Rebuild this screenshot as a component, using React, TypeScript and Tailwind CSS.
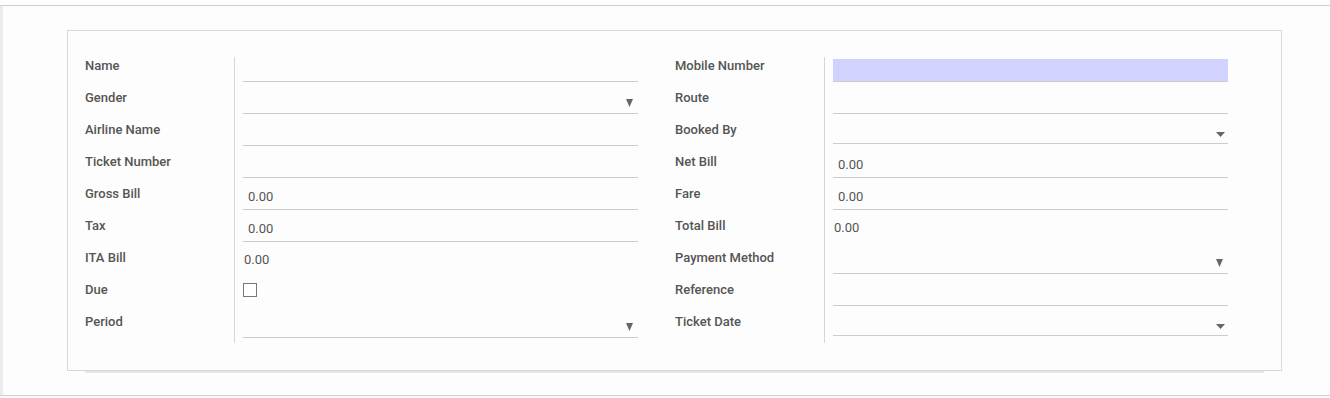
import React from "react";

type Field = {
  label: string;
  kind: "text" | "select" | "select2" | "value" | "readonly" | "check" | "highlight";
  value?: string;
};

const left: Field[] = [
  { label: "Name", kind: "text" },
  { label: "Gender", kind: "select" },
  { label: "Airline Name", kind: "text" },
  { label: "Ticket Number", kind: "text" },
  { label: "Gross Bill", kind: "value", value: "0.00" },
  { label: "Tax", kind: "value", value: "0.00" },
  { label: "ITA Bill", kind: "readonly", value: "0.00" },
  { label: "Due", kind: "check" },
  { label: "Period", kind: "select" },
];

const right: Field[] = [
  { label: "Mobile Number", kind: "highlight" },
  { label: "Route", kind: "text" },
  { label: "Booked By", kind: "select2" },
  { label: "Net Bill", kind: "value", value: "0.00" },
  { label: "Fare", kind: "value", value: "0.00" },
  { label: "Total Bill", kind: "readonly", value: "0.00" },
  { label: "Payment Method", kind: "select" },
  { label: "Reference", kind: "text" },
  { label: "Ticket Date", kind: "select2" },
];

function Caret({ wide }: { wide?: boolean }) {
  return wide ? (
    <svg width="9" height="5" viewBox="0 0 9 5" className="absolute right-[3px] top-[9px]">
      <path d="M0 0h9L4.5 5z" fill="#666" />
    </svg>
  ) : (
    <svg width="7" height="8" viewBox="0 0 7 8" className="absolute right-[5px] top-[8px]">
      <path d="M0 0h7L3.5 8z" fill="#666" />
    </svg>
  );
}

function Widget({ f }: { f: Field }) {
  switch (f.kind) {
    case "readonly":
      return (
        <div className="h-8 pt-[3px] pl-[1px] text-[13px] leading-4 text-[#555]">
          {f.value}
        </div>
      );
    case "check":
      return (
        <div className="h-8 pt-[2px]">
          <div className="h-[14px] w-[14px] border border-[#777] bg-white" />
        </div>
      );
    default:
      return (
        <div className="h-8 pt-[2px]">
          <div
            className={`relative border-b border-[#cccccc] ${
              f.kind === "select2" ? "h-[21px]" : "h-[23px]"
            } ${f.kind === "highlight" ? "bg-[#d2d2ff]" : ""}`}
          >
            {f.value && (
              <span className="absolute left-[5px] top-[2px] text-[13px] leading-4 text-[#555]">
                {f.value}
              </span>
            )}
            {f.kind === "select" && <Caret />}
            {f.kind === "select2" && <Caret wide />}
          </div>
        </div>
      );
  }
}

function Group({ fields }: { fields: Field[] }) {
  return (
    <div className="flex items-start">
      <div className="w-[150px] border-r border-[#d6d6d6]">
        {fields.map((f) => (
          <div
            key={f.label}
            className="h-8 pt-[1px] text-[13px] leading-4 font-medium text-[#555] last:h-[30px]"
          >
            {f.label}
          </div>
        ))}
      </div>
      <div className="ml-[8px] w-[395px]">
        {fields.map((f) => (
          <Widget key={f.label} f={f} />
        ))}
      </div>
    </div>
  );
}

export default function App() {
  return (
    <div
      className="h-[398px] w-[1330px] bg-[#fdfdfd] pt-[5px]"
      style={{ fontFamily: "Roboto, 'Liberation Sans', sans-serif" }}
    >
      <div className="h-[391px] border-y border-[#cfcfcf]">
        <div className="flex h-full border-l-[3px] border-[#ececec] pt-[24px] pl-[64px]">
          <div className="w-[1215px]">
            <div className="h-[341px] border border-[#d9d9d9] bg-[#fdfdfd] pl-[17px] pt-[26px]">
              <div className="flex gap-[37px]">
                <Group fields={left} />
                <Group fields={right} />
              </div>
            </div>
            <div className="mx-[18px] h-[2px] bg-[#e6e6e6]" />
          </div>
        </div>
      </div>
    </div>
  );
}
